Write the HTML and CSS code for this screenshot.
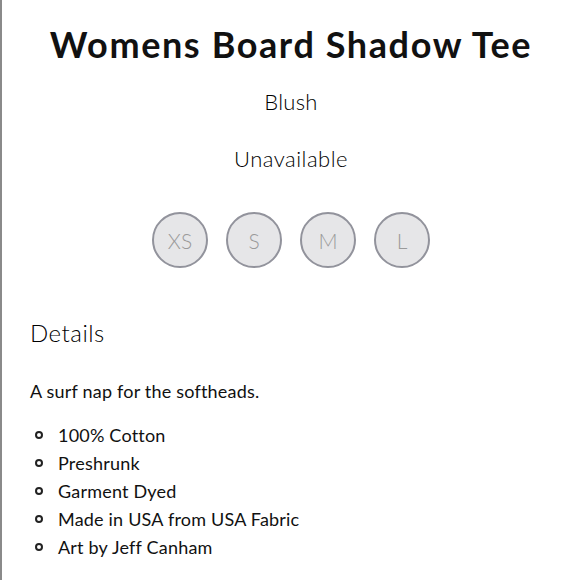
FILE: index.html
```html
<!DOCTYPE html>
<html>
<head>
<meta charset="utf-8">
<link rel="stylesheet" href="styles.css">
</head>
<body>
<div class="page">
  <h1 class="title">Womens Board Shadow Tee</h1>
  <div class="color">Blush</div>
  <div class="status">Unavailable</div>
  <div class="sizes">
    <span class="size">XS</span>
    <span class="size">S</span>
    <span class="size">M</span>
    <span class="size">L</span>
  </div>
  <h2 class="details-title">Details</h2>
  <p class="desc">A surf nap for the softheads.</p>
  <ul class="features">
    <li>100% Cotton</li>
    <li>Preshrunk</li>
    <li>Garment Dyed</li>
    <li>Made in USA from USA Fabric</li>
    <li>Art by Jeff Canham</li>
  </ul>
</div>
</body>
</html>
```
FILE: styles.css
```css
html, body {
  margin: 0;
  padding: 0;
  background: #fff;
}
body {
  font-family: Lato, "Open Sans", sans-serif;
  color: #111;
}
.page {
  width: 578px;
  height: 580px;
  border-left: 2px solid #8a8a8a;
  overflow: hidden;
}
.title {
  margin: 22px 0 0;
  text-align: center;
  font-size: 36px;
  font-weight: 700;
  line-height: 44px;
  letter-spacing: 1.6px;
}
.color {
  margin-top: 22px;
  text-align: center;
  font-size: 22px;
  font-weight: 300;
  line-height: 28px;
  letter-spacing: 0.3px;
  color: #000;
}
.status {
  margin-top: 29px;
  text-align: center;
  font-size: 22px;
  font-weight: 300;
  line-height: 28px;
  letter-spacing: 0.5px;
  color: #000;
}
.sizes {
  display: flex;
  justify-content: center;
  gap: 18px;
  margin-top: 39px;
}
.size {
  width: 52px;
  height: 52px;
  border-radius: 50%;
  border: 2px solid #92939c;
  background: #e6e6e8;
  color: #9a9a9a;
  font-size: 21px;
  font-weight: 300;
  display: flex;
  align-items: center;
  justify-content: center;
}
.details-title {
  margin: 50px 0 0 28px;
  font-size: 24px;
  font-weight: 300;
  line-height: 30px;
  letter-spacing: 0.5px;
  color: #000;
}
.desc {
  margin: 31px 0 0 28px;
  font-size: 18px;
  font-weight: 400;
  line-height: 24px;
  letter-spacing: 0.2px;
}
.features {
  margin: 18px 0 0 28px;
  padding: 0;
  list-style: none;
  font-size: 18px;
  line-height: 28px;
  letter-spacing: 0.2px;
}
.features li {
  display: flex;
  align-items: center;
  gap: 15px;
  padding-left: 5px;
}
.features li::before {
  content: "";
  width: 4px;
  height: 4px;
  border: 2px solid #222;
  border-radius: 50%;
  flex: none;
}
```
